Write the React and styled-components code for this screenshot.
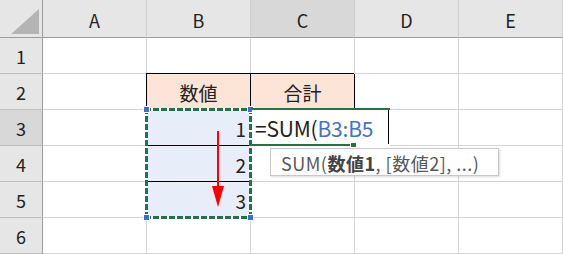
import React from 'react'
import styled, { createGlobalStyle } from "styled-components";

const GlobalStyle = createGlobalStyle`
  html, body {
    margin: 0;
    padding: 0;
    background: #fff;
    overflow: hidden;
  }
`;

const cols = ["A", "B", "C", "D", "E"];
const rows = [1, 2, 3, 4, 5, 6];

const cellContent = {
  "B2": { text: "数値", tone: "head", align: "center" },
  "C2": { text: "合計", tone: "head", align: "center" },
  "B3": { text: "1", tone: "sel", align: "right" },
  "B4": { text: "2", tone: "sel", align: "right" },
  "B5": { text: "3", tone: "sel", align: "right" },
};

const App = () => {
  return (
    <>
      <GlobalStyle />
      <Sheet>
        <Grid>
          <Corner>
            <CornerTriangle />
          </Corner>
          {cols.map((c) => (
            <ColHead key={c} active={c === "C"}>{c}</ColHead>
          ))}
          {rows.map((r) => (
            <React.Fragment key={r}>
              <RowHead active={r === 3}>{r}</RowHead>
              {cols.map((c) => {
                const cell = cellContent[c + r];
                return (
                  <Cell
                    key={c + r}
                    tone={cell ? cell.tone : undefined}
                    align={cell ? cell.align : "left"}
                    boxed={!!cell}
                  >
                    {cell ? cell.text : ""}
                  </Cell>
                );
              })}
            </React.Fragment>
          ))}
        </Grid>

        {/* copy range B3:B5 with marching ants */}
        <Ants>
          <Handle $v="top" $h="left" />
          <Handle $v="top" $h="right" />
          <Handle $v="bottom" $h="left" />
          <Handle $v="bottom" $h="right" />
        </Ants>

        <Arrow width="14" height="77" viewBox="0 0 14 77">
          <line x1="7" y1="0" x2="7" y2="58" stroke="#ff0000" strokeWidth="2" />
          <polygon points="1,55 13,55 7,76" fill="#ff0000" />
        </Arrow>

        {/* C3 in edit mode */}
        <Editor>
          <Formula>
            =SUM(<Ref>B3:B5</Ref>
          </Formula>
          <Caret />
          <FillHandle />
        </Editor>

        <Tip>
          SUM(<b>数値1</b>, [数値2], ...)
        </Tip>
      </Sheet>
    </>
  )
}

export default App

const Sheet = styled.div`
  position: relative;
  width: 563px;
  height: 254px;
  overflow: hidden;
  font-family: "Noto Sans CJK JP", "Noto Sans", sans-serif;
`;

const Grid = styled.div`
  display: grid;
  grid-template-columns: 43px repeat(5, 104px);
  grid-template-rows: 38px repeat(6, 36px);
`;

const Corner = styled.div`
  position: relative;
  background: #e6e6e6;
  border-right: 1px solid #9b9b9b;
  border-bottom: 1px solid #9b9b9b;
  box-sizing: border-box;
`;

const CornerTriangle = styled.div`
  position: absolute;
  right: 3px;
  bottom: 3px;
  width: 0;
  height: 0;
  border-left: 28px solid transparent;
  border-bottom: 25px solid #b4b4b4;
`;

const ColHead = styled.div`
  display: flex;
  align-items: center;
  justify-content: center;
  box-sizing: border-box;
  background: ${(p) => (p.active ? "#d8d8d8" : "#e6e6e6")};
  border-right: 1px solid #cfcfcf;
  border-bottom: 1px solid #9b9b9b;
  font-size: 18px;
  color: #222;
  padding-top: 3px;
`;

const RowHead = styled.div`
  display: flex;
  align-items: center;
  justify-content: center;
  box-sizing: border-box;
  background: ${(p) => (p.active ? "#d8d8d8" : "#e6e6e6")};
  border-right: 1px solid #9b9b9b;
  border-bottom: 1px solid #bdbdbd;
  font-size: 18px;
  color: #222;
`;

const Cell = styled.div`
  display: flex;
  align-items: center;
  justify-content: ${(p) => (p.align === "right" ? "flex-end" : "center")};
  box-sizing: border-box;
  padding: 1px 4px 0;
  background: ${(p) =>
    p.tone === "head" ? "#fce4d6" : p.tone === "sel" ? "#e8eef9" : "#fff"};
  border-right: 1px solid ${(p) => (p.boxed ? "#000" : "#d4d4d4")};
  border-bottom: 1px solid ${(p) => (p.boxed ? "#000" : "#d4d4d4")};
  box-shadow: ${(p) => (p.tone === "head" ? "-1px -1px 0 #000" : "none")};
  font-size: 19px;
  color: #222;
`;

const Ants = styled.div`
  position: absolute;
  left: 145px;
  top: 108px;
  width: 107px;
  height: 111px;
  box-sizing: border-box;
  background:
    repeating-linear-gradient(90deg, #217346 0 6px, #fff 6px 8px) top / 100% 3px no-repeat,
    repeating-linear-gradient(90deg, #217346 0 6px, #fff 6px 8px) bottom / 100% 3px no-repeat,
    repeating-linear-gradient(180deg, #217346 0 6px, #fff 6px 8px) left / 3px 100% no-repeat,
    repeating-linear-gradient(180deg, #217346 0 6px, #fff 6px 8px) right / 3px 100% no-repeat;
`;

const Handle = styled.div`
  position: absolute;
  ${(p) => p.$v}: -1px;
  ${(p) => p.$h}: -1px;
  width: 5px;
  height: 5px;
  background: #3a70d4;
  outline: 1px solid #fff;
`;

const Arrow = styled.svg`
  position: absolute;
  left: 211px;
  top: 131px;
`;

const Editor = styled.div`
  position: absolute;
  left: 252px;
  top: 108px;
  width: 138px;
  height: 38px;
  box-sizing: border-box;
  display: flex;
  align-items: center;
  background:
    linear-gradient(#217346, #217346) left bottom / 98px 2px no-repeat,
    #fff;
  border-top: 2px solid #217346;
  padding-bottom: 2px;
`;

const Formula = styled.span`
  flex: 1;
  font-size: 21px;
  color: #222;
  padding-left: 3px;
  padding-top: 1px;
  white-space: nowrap;
  letter-spacing: -0.2px;
`;

const Ref = styled.span`
  color: #4472c4;
`;

const Caret = styled.div`
  align-self: stretch;
  width: 1px;
  margin-right: 1px;
  background: #000;
`;

const FillHandle = styled.div`
  position: absolute;
  left: 99px;
  bottom: -1px;
  width: 5px;
  height: 4px;
  background: #217346;
  outline: 1px solid #fff;
`;

const Tip = styled.div`
  position: absolute;
  left: 270px;
  top: 148px;
  width: 229px;
  height: 28px;
  box-sizing: border-box;
  padding: 1px 0 0 10px;
  display: flex;
  align-items: center;
  background: #fff;
  border: 1px solid #c8c8c8;
  box-shadow: 1px 1px 2px rgba(0, 0, 0, 0.15);
  font-size: 18px;
  letter-spacing: 0.5px;
  color: #595959;
  white-space: nowrap;

  b {
    font-weight: 700;
    color: #444;
  }
`;
